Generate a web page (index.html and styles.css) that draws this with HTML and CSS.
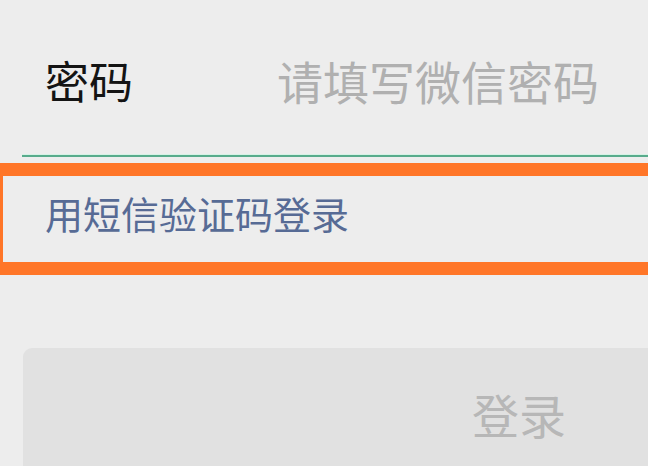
FILE: index.html
```html
<!DOCTYPE html>
<html lang="zh-CN">
<head>
<meta charset="utf-8">
<title>密码登录</title>
<link rel="stylesheet" href="styles.css">
</head>
<body>
<div class="page">
  <div class="field">
    <span class="label">密码</span>
    <span class="placeholder">请填写微信密码</span>
  </div>
  <div class="underline"></div>
  <div class="sms-row">
    <span class="sms-link">用短信验证码登录</span>
  </div>
  <div class="login-btn">
    <span class="login-text">登录</span>
  </div>
</div>
</body>
</html>
```
FILE: styles.css
```css
html, body {
  margin: 0;
  padding: 0;
  background: #ededed;
  overflow: hidden;
}
body {
  width: 648px;
  height: 466px;
  font-family: "Noto Sans CJK SC", "Noto Sans", sans-serif;
}
.page {
  display: flex;
  flex-direction: column;
  width: 648px;
  height: 466px;
  overflow: hidden;
}
.field {
  flex: none;
  display: flex;
  align-items: center;
  height: 86px;
  margin-top: 37px;
  padding-left: 45px;
}
.label {
  font-size: 44px;
  line-height: 1;
  color: #141414;
  width: 232px;
  flex: none;
}
.placeholder {
  font-size: 46px;
  line-height: 1;
  color: #b0b0b0;
  white-space: nowrap;
}
.underline {
  flex: none;
  margin-top: 32px;
  margin-left: 22px;
  height: 2px;
  background: #58ab8c;
  box-shadow: 0 -1px 0 #d6f2e6;
}
.sms-row {
  flex: none;
  margin-top: 6px;
  box-sizing: border-box;
  width: 700px;
  height: 112px;
  border-top: 13px solid #ff7628;
  border-bottom: 13px solid #ff7628;
  border-left: 3px solid #ff7628;
  display: flex;
  align-items: center;
  padding-left: 42px;
  padding-bottom: 12px;
}
.sms-link {
  font-size: 38px;
  line-height: 1;
  color: #576b95;
  white-space: nowrap;
}
.login-btn {
  flex: none;
  margin-top: 73px;
  margin-left: 23px;
  width: 992px;
  height: 130px;
  border-radius: 9px;
  background: #e1e1e1;
  display: flex;
  align-items: center;
  justify-content: center;
}
.login-text {
  font-size: 47px;
  line-height: 1;
  color: #b7b7b7;
}
```
